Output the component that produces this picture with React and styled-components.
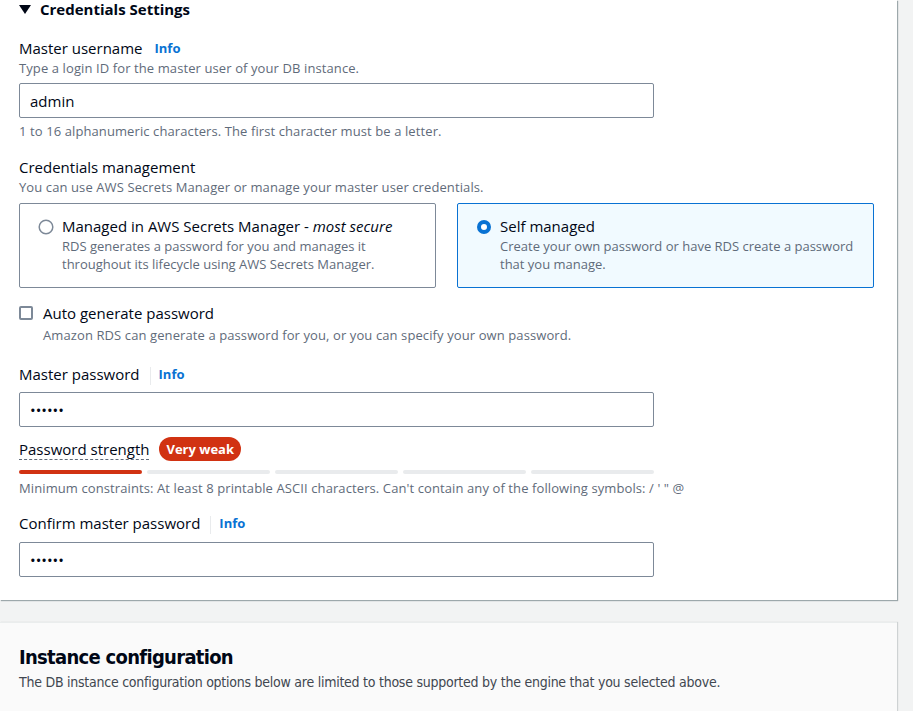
import React from "react";
import styled, { createGlobalStyle } from "styled-components";

const GlobalStyle = createGlobalStyle`
  body {
    margin: 0;
    background: #f2f3f3;
    font-family: "Open Sans", "Noto Sans", sans-serif;
    color: #000716;
  }
`;

const Page = styled.div`
  padding-right: 16px;
`;

const Card = styled.section`
  background: #ffffff;
  box-shadow: 1px 1px 1px rgba(0, 28, 36, 0.35);
  padding: 0 19px 23px 19px;
`;

const SectionToggle = styled.div`
  display: flex;
  align-items: center;
  gap: 9px;
  height: 18px;
  font-size: 15px;
  font-weight: 700;

  svg {
    flex-shrink: 0;
  }
`;

const Field = styled.div`
  display: flex;
  flex-direction: column;
  margin-top: ${(p) => p.$top || 0}px;
`;

const LabelRow = styled.div`
  display: flex;
  align-items: center;
  font-size: 15px;
  line-height: 22px;
`;

const Info = styled.span`
  font-size: 13px;
  font-weight: 700;
  color: #0972d3;
  margin-left: ${(p) => (p.$divided ? 0 : 12)}px;
  ${(p) =>
    p.$divided &&
    `
    &::before {
      content: "";
      display: inline-block;
      width: 1px;
      height: 18px;
      background: #e9ebed;
      margin: 0 8px 0 10px;
      vertical-align: middle;
    }
  `}
`;

const Hint = styled.div`
  font-size: 13px;
  line-height: 18px;
  letter-spacing: ${(p) => (p.$tight ? 0 : 0.1)}px;
  white-space: nowrap;
  color: #5f6b7a;
  margin-top: ${(p) => p.$top || 0}px;
`;

const Input = styled.input`
  box-sizing: border-box;
  width: 635px;
  height: 35px;
  margin-top: ${(p) => p.$top || 0}px;
  padding: 0 10px;
  border: 1px solid #7d8998;
  border-radius: 2px;
  font-family: inherit;
  font-size: 15px;
  color: #000716;
  background: #fff;
  outline: none;
`;

const Tiles = styled.div`
  display: grid;
  grid-template-columns: 417px 417px;
  gap: 21px;
  margin-top: 7px;
`;

const Tile = styled.div`
  box-sizing: border-box;
  height: 85px;
  display: flex;
  gap: 8px;
  padding: 11px 18px 12px 18px;
  border: 1px solid ${(p) => (p.$selected ? "#0972d3" : "#7d8998")};
  border-radius: 2px;
  background: ${(p) => (p.$selected ? "#f1faff" : "#ffffff")};
`;

const Control = styled.div`
  flex-shrink: 0;
  padding-top: 3px;
`;

const TileText = styled.div`
  display: flex;
  flex-direction: column;
`;

const TileTitle = styled.div`
  font-size: 15px;
  line-height: 22px;

  em {
    font-style: italic;
  }
`;

const CheckRow = styled.div`
  display: flex;
  gap: 10px;
  margin-top: 14px;
`;

const Checkbox = styled.span`
  box-sizing: border-box;
  display: block;
  width: 14px;
  height: 14px;
  margin-top: 4px;
  border: 2px solid #7d8998;
  border-radius: 2px;
  background: #fff;
`;

const StrengthRow = styled.div`
  display: flex;
  align-items: center;
  gap: 10px;
  margin-top: 11px;
  height: 22px;
`;

const StrengthLabel = styled.span`
  font-size: 15px;
  line-height: 20px;
  border-bottom: 1px dashed #5f6b7a;
`;

const Badge = styled.span`
  display: inline-flex;
  align-items: center;
  height: 24px;
  padding: 0 7px;
  border-radius: 12px;
  background: #d13212;
  color: #fff;
  font-size: 13px;
  font-weight: 700;
`;

const Meter = styled.div`
  display: grid;
  grid-template-columns: repeat(5, 1fr);
  gap: 5px;
  width: 635px;
  margin-top: 10px;
`;

const Segment = styled.span`
  height: 4px;
  border-radius: 2px;
  background: ${(p) => (p.$on ? "#d13212" : "#e9ebed")};
`;

const Gap = styled.div`
  height: 22px;
`;

const SubCard = styled.section`
  background: #fafafa;
  border-top: 1px solid #eaeded;
  box-shadow: 1px 0 1px rgba(0, 28, 36, 0.15);
  padding: 21px 19px 20px 19px;
  font-family: "Liberation Sans Narrow", "DejaVu Sans Condensed", sans-serif;
  height: 100px;
`;

const SubTitle = styled.h2`
  margin: 0;
  font-size: 20px;
  line-height: 26px;
  font-weight: 700;
  letter-spacing: -0.7px;
`;

const SubHint = styled.p`
  margin: 2px 0 0 0;
  font-size: 14px;
  line-height: 20px;
  letter-spacing: -0.25px;
  color: #414750;
`;

const Radio = ({ checked }) =>
  checked ? (
    <svg width="16" height="16" viewBox="0 0 16 16">
      <circle cx="8" cy="8" r="5" fill="#fff" stroke="#0972d3" strokeWidth="4" />
    </svg>
  ) : (
    <svg width="16" height="16" viewBox="0 0 16 16">
      <circle cx="8" cy="8" r="6.8" fill="#fff" stroke="#7d8998" strokeWidth="1.5" />
    </svg>
  );

const App = () => {
  const strength = 1;
  return (
    <Page>
      <GlobalStyle />
      <Card>
        <SectionToggle>
          <svg width="12" height="10" viewBox="0 0 12 10">
            <path d="M0 1h12L6 10z" fill="#000716" />
          </svg>
          Credentials Settings
        </SectionToggle>

        <Field $top={19}>
          <LabelRow>
            Master username
            <Info>Info</Info>
          </LabelRow>
          <Hint>Type a login ID for the master user of your DB instance.</Hint>
          <Input $top={6} defaultValue="admin" />
          <Hint $top={4}>1 to 16 alphanumeric characters. The first character must be a letter.</Hint>
        </Field>

        <Field $top={16}>
          <LabelRow>Credentials management</LabelRow>
          <Hint>You can use AWS Secrets Manager or manage your master user credentials.</Hint>
          <Tiles>
            <Tile>
              <Control>
                <Radio />
              </Control>
              <TileText>
                <TileTitle>
                  Managed in AWS Secrets Manager - <em>most secure</em>
                </TileTitle>
                <Hint $tight>
                  RDS generates a password for you and manages it
                  <br />
                  throughout its lifecycle using AWS Secrets Manager.
                </Hint>
              </TileText>
            </Tile>
            <Tile $selected>
              <Control>
                <Radio checked />
              </Control>
              <TileText>
                <TileTitle>Self managed</TileTitle>
                <Hint $tight>
                  Create your own password or have RDS create a password
                  <br />
                  that you manage.
                </Hint>
              </TileText>
            </Tile>
          </Tiles>
        </Field>

        <CheckRow>
          <Checkbox />
          <TileText>
            <TileTitle>Auto generate password</TileTitle>
            <Hint $top={2}>
              Amazon RDS can generate a password for you, or you can specify your own password.
            </Hint>
          </TileText>
        </CheckRow>

        <Field $top={19}>
          <LabelRow>
            Master password
            <Info $divided>Info</Info>
          </LabelRow>
          <Input $top={7} type="password" defaultValue="qwerty" />
          <StrengthRow>
            <StrengthLabel>Password strength</StrengthLabel>
            <Badge>Very weak</Badge>
          </StrengthRow>
          <Meter>
            {[0, 1, 2, 3, 4].map((i) => (
              <Segment key={i} $on={i < strength} />
            ))}
          </Meter>
          <Hint $top={5}>
            Minimum constraints: At least 8 printable ASCII characters. Can't contain any of the
            following symbols: / ' " @
          </Hint>
        </Field>

        <Field $top={15}>
          <LabelRow>
            Confirm master password
            <Info $divided>Info</Info>
          </LabelRow>
          <Input $top={8} type="password" defaultValue="qwerty" />
        </Field>
      </Card>

      <Gap />

      <SubCard>
        <SubTitle>Instance configuration</SubTitle>
        <SubHint>
          The DB instance configuration options below are limited to those supported by the engine
          that you selected above.
        </SubHint>
      </SubCard>
    </Page>
  );
};

export default App;
